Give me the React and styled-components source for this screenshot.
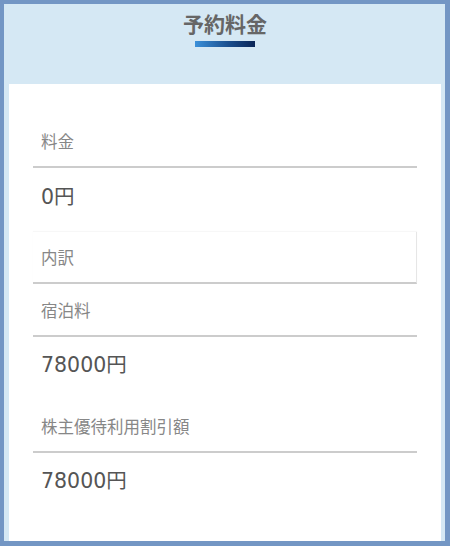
import React from "react";
import styled, { createGlobalStyle } from "styled-components";

const Global = createGlobalStyle`
  html, body { margin: 0; padding: 0; background: #ffffff; }
  body { font-family: "Noto Sans CJK JP", "Noto Sans", sans-serif; }
  * { box-sizing: border-box; }
`;

const Frame = styled.div`
  width: 450px;
  height: 546px;
  border-style: solid;
  border-color: #7396c4;
  border-width: 4px 5px 5px 4px;
  background: #d5e8f4;
  display: flex;
  flex-direction: column;
  padding: 0 4px 0 5px;
`;

const Header = styled.header`
  height: 80px;
  display: flex;
  flex-direction: column;
  align-items: center;
  padding-top: 4px;
`;

const Title = styled.h1`
  margin: 0;
  font-size: 21px;
  line-height: 30px;
  font-weight: 700;
  color: #666666;
  letter-spacing: 0;
`;

const TitleBar = styled.div`
  width: 60px;
  height: 6px;
  margin-top: 3px;
  background: linear-gradient(90deg, #3b90d9 0%, #1a4f8f 55%, #0a2556 100%);
`;

const Card = styled.section`
  flex: 1;
  background: #ffffff;
  padding: 32px 24px 0 24px;
  display: flex;
  flex-direction: column;
`;

const Label = styled.div`
  padding: ${(p) => p.$pad};
  padding-left: 8px;
  font-size: 16.5px;
  line-height: 26px;
  color: #878787;
  border-bottom: 2px solid #cccccc;
  ${(p) =>
    p.$boxed &&
    `
    border-right: 1px solid #e6e6e6;
    box-shadow: 0 -1px 1px rgba(0,0,0,0.03);
  `}
`;

const Value = styled.div`
  padding: ${(p) => p.$pad};
  padding-left: 8px;
  font-family: "DejaVu Sans", "Noto Sans CJK JP", sans-serif;
  font-size: 20.5px;
  line-height: 26px;
  color: #555555;
`;

export default function App() {
  return (
    <>
      <Global />
      <Frame>
        <Header>
          <Title>予約料金</Title>
          <TitleBar />
        </Header>
        <Card>
          <Label $pad="12px 0 12px">料金</Label>
          <Value $pad="16px 0 22px">0円</Value>
          <Label $pad="12px 0 12px" $boxed>内訳</Label>
          <Label $pad="13px 0 12px">宿泊料</Label>
          <Value $pad="15px 0 23px">78000円</Value>
          <Label $pad="12px 0 12px">株主優待利用割引額</Label>
          <Value $pad="15px 0 0">78000円</Value>
        </Card>
      </Frame>
    </>
  );
}
